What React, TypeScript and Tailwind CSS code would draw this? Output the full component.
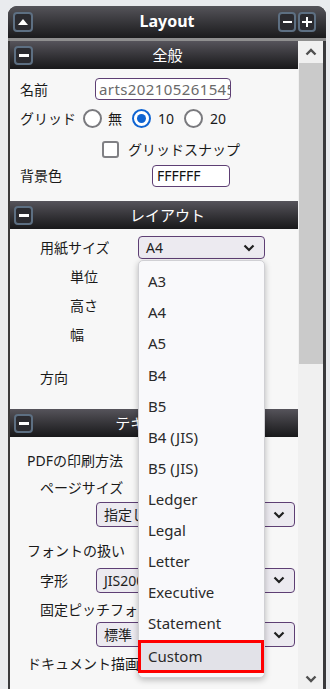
import React from 'react';

const JP = "font-['Noto_Sans','Noto_Sans_CJK_JP',sans-serif]";

function SectionHeader({ title }: { title: string }) {
  return (
    <div className="flex h-[28px] items-center bg-gradient-to-b from-[#56545b] to-[#19191b] pl-[4px]">
      <div className="flex h-[19px] w-[19px] items-center justify-center rounded-[4px] border-2 border-[#5d6f82] bg-[#2b2b30]">
        <div className="h-[3px] w-[10px] bg-white" />
      </div>
      <div className="ml-[4px] flex-1 text-center text-[15px] leading-none text-white">{title}</div>
    </div>
  );
}

function Radio({ checked }: { checked?: boolean }) {
  return checked ? (
    <div className="flex h-[19px] w-[19px] items-center justify-center rounded-full border-2 border-[#0f64d2] bg-white">
      <div className="h-[9px] w-[9px] rounded-full bg-[#0f64d2]" />
    </div>
  ) : (
    <div className="h-[19px] w-[19px] rounded-full border-2 border-[#7a7a7e] bg-white" />
  );
}

function Chevron() {
  return (
    <svg width="12" height="8" viewBox="0 0 12 8">
      <path d="M1.5 1.5 L6 6 L10.5 1.5" fill="none" stroke="#202020" strokeWidth="2.2" />
    </svg>
  );
}

function Select({ value, className }: { value: string; className: string }) {
  return (
    <div
      className={`flex items-center justify-between rounded-[4px] border border-[#5e3f74] bg-[#eceaf0] pl-[7px] pr-[9px] text-[14px] text-[#1e1e1e] ${className}`}
    >
      <span className="whitespace-nowrap">{value}</span>
      <Chevron />
    </div>
  );
}

const sizes = ['A3', 'A4', 'A5', 'B4', 'B5', 'B4 (JIS)', 'B5 (JIS)', 'Ledger', 'Legal', 'Letter', 'Executive', 'Statement'];

export default function App() {
  return (
    <div className={`relative h-[689px] w-[330px] overflow-hidden bg-[#e9ebee] ${JP}`}>
      <div className="ml-[8px] mt-[6px] flex h-[683px] w-[318px] flex-col overflow-hidden rounded-t-[9px] bg-[#3a3a3c]">
        {/* Title bar */}
        <div className="grid h-[32px] shrink-0 grid-cols-[1fr_auto_1fr] items-center bg-gradient-to-b from-[#55545a] to-[#1b1b1d] px-[5px]">
          <div className="flex">
            <div className="flex h-[20px] w-[20px] items-center justify-center rounded-[4px] border-2 border-[#5d6f82] bg-[#2b2b30]">
              <svg width="10" height="6" viewBox="0 0 10 6">
                <path d="M0 6 L5 0 L10 6 Z" fill="white" />
              </svg>
            </div>
          </div>
          <div className="pb-[3px] text-[16px] font-bold leading-none text-white">Layout</div>
          <div className="flex justify-end gap-[2px] pr-[5px]">
            <div className="flex h-[20px] w-[18px] items-center justify-center rounded-[4px] border-2 border-[#5d6f82] bg-[#2b2b30]">
              <div className="h-[2px] w-[9px] bg-white" />
            </div>
            <div className="relative flex h-[20px] w-[18px] items-center justify-center rounded-[4px] border-2 border-[#5d6f82] bg-[#2b2b30]">
              <div className="h-[2px] w-[10px] bg-white" />
              <div className="absolute h-[10px] w-[2px] bg-white" />
            </div>
          </div>
        </div>
        <div className="h-[3px] shrink-0 bg-[#8f8f8f]" />

        {/* Body */}
        <div className="flex min-h-0 flex-1 pl-[2px] pr-[3px]">
          <div className="w-[288px] overflow-hidden bg-[#f7f7f7] text-[14px] text-[#1a1a1a]">
            <SectionHeader title="全般" />
            <div className="pb-[15px] pt-[6px]">
              <div className="flex h-[28px] items-center pl-[10px]">
                <span className="w-[75px]">名前</span>
                <div className="flex h-[22px] w-[136px] items-center overflow-hidden whitespace-nowrap rounded-[4px] border border-[#5e3f74] bg-white pl-[3px] text-[15px] tracking-[0.4px] text-[#6a6a6a]">
                  arts20210526154512
                </div>
              </div>
              <div className="flex h-[30px] items-center pl-[10px]">
                <span className="w-[63px]">グリッド</span>
                <Radio />
                <span className="ml-[6px] mr-[10px]">無</span>
                <Radio checked />
                <span className="ml-[7px] mr-[10px]">10</span>
                <Radio />
                <span className="ml-[7px]">20</span>
              </div>
              <div className="flex h-[32px] items-center pl-[92px]">
                <div className="h-[17px] w-[17px] rounded-[3px] border-2 border-[#808084] bg-white" />
                <span className="ml-[9px]">グリッドスナップ</span>
              </div>
              <div className="flex h-[21px] items-center pl-[10px]">
                <span className="w-[132px]">背景色</span>
                <div className="flex h-[22px] w-[78px] items-center rounded-[4px] border border-[#5e3f74] bg-white pl-[4px] text-[#111]">
                  FFFFFF
                </div>
              </div>
            </div>

            <SectionHeader title="レイアウト" />
            <div className="pb-[18px] pt-[4px]">
              <div className="flex h-[29px] items-center pl-[30px]">
                <span className="w-[98px]">用紙サイズ</span>
                <Select value="A4" className="h-[23px] w-[127px]" />
              </div>
              <div className="flex h-[29px] items-center pl-[60px]">単位</div>
              <div className="flex h-[29px] items-center pl-[60px]">高さ</div>
              <div className="flex h-[29px] items-center pl-[60px]">幅</div>
              <div className="mt-[14px] flex h-[28px] items-center pl-[30px]">方向</div>
            </div>

            <SectionHeader title="テキストの出力" />
            <div className="pt-[9px]">
              <div className="flex h-[28px] items-center pl-[17px]">PDFの印刷方法</div>
              <div className="flex h-[26px] items-center pl-[30px]">ページサイズ</div>
              <div className="mt-[2px] flex h-[25px] items-center pl-[86px]">
                <Select value="指定した用紙サイズ" className="h-[25px] w-[199px]" />
              </div>
              <div className="mt-[10px] flex h-[26px] items-center pl-[17px]">フォントの扱い</div>
              <div className="mt-[4px] flex h-[26px] items-center pl-[30px]">
                <span className="w-[56px]">字形</span>
                <Select value="JIS2004" className="h-[25px] w-[199px]" />
              </div>
              <div className="mt-[3px] flex h-[26px] items-center whitespace-nowrap pl-[30px]">固定ピッチフォント</div>
              <div className="flex h-[25px] items-center pl-[86px]">
                <Select value="標準" className="h-[25px] w-[199px]" />
              </div>
              <div className="mt-[3px] flex h-[26px] items-center whitespace-nowrap pl-[17px]">ドキュメント描画</div>
            </div>
          </div>

          {/* Scrollbar */}
          <div className="flex w-[25px] flex-col bg-[#f0f0f0]">
            <div className="flex h-[21px] items-center justify-center">
              <svg width="12" height="8" viewBox="0 0 12 8">
                <path d="M1.5 6.5 L6 2 L10.5 6.5" fill="none" stroke="#505050" strokeWidth="2.4" />
              </svg>
            </div>
            <div className="ml-[1px] mt-[1px] h-[301px] bg-[#cacaca]" />
            <div className="flex-1" />
            <div className="flex h-[14px] items-start justify-center">
              <svg width="12" height="8" viewBox="0 0 12 8">
                <path d="M1.5 1.5 L6 6 L10.5 1.5" fill="none" stroke="#505050" strokeWidth="2.4" />
              </svg>
            </div>
          </div>
        </div>
      </div>

      {/* Open select list */}
      <div className="absolute left-[138px] top-[260px] h-[418px] w-[127px] rounded-[5px] border border-[#d0d0d4] bg-[#f9f9fb] pt-[5px] shadow-[0_2px_6px_rgba(0,0,0,0.25)]">
        {sizes.map((s) => (
          <div key={s} className="flex h-[31.1px] items-center pl-[9px] text-[15px] text-[#2a2a2a]">
            {s}
          </div>
        ))}
        <div className="-ml-px mt-[1px] flex h-[33px] items-center border-[3px] border-[#ff0000] bg-[#e2e2e8] pl-[7px] text-[15px] text-[#2a2a2a]">
          Custom
        </div>
      </div>
    </div>
  );
}
